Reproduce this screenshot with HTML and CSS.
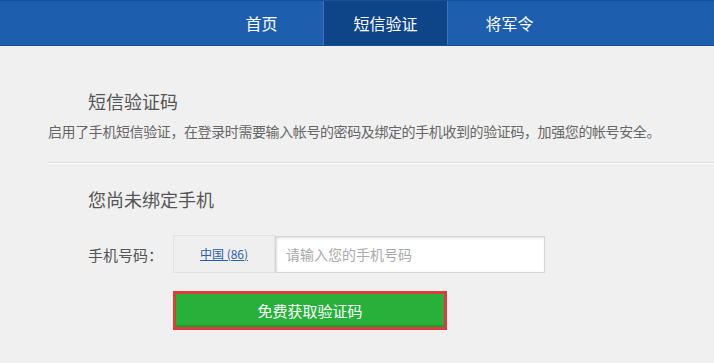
FILE: index.html
```html
<!DOCTYPE html>
<html lang="zh-CN">
<head>
  <meta charset="UTF-8">
  <meta name="viewport" content="width=device-width, initial-scale=1.0">
  <title>短信验证</title>
  <link rel="stylesheet" href="styles.css">
</head>
<body>
  <!-- Top navigation -->
  <div class="nav">
    <a class="nav-item" href="#">首页</a>
    <a class="nav-item active" href="#">短信验证</a>
    <a class="nav-item" href="#">将军令</a>
  </div>

  <div class="content">
    <div class="intro">
      <h2>短信验证码</h2>
      <p>启用了手机短信验证，在登录时需要输入帐号的密码及绑定的手机收到的验证码，加强您的帐号安全。</p>
    </div>

    <div class="bind">
      <h3>您尚未绑定手机</h3>
      <div class="phone-row">
        <label for="phone">手机号码：</label>
        <div class="country"><a href="#">中国 (86)</a></div>
        <input type="text" id="phone" placeholder="请输入您的手机号码">
      </div>
      <div class="btn-wrap">
        <button class="send-btn">免费获取验证码</button>
      </div>
    </div>
  </div>
</body>
</html>
```

FILE: styles.css
```css
body {
  margin: 0;
  background: #f0f0f0;
  font-family: "Microsoft YaHei", "Noto Sans CJK SC", sans-serif;
  color: #555;
}
.nav {
  height: 44px;
  background: #1d5eae;
  border-top: 1px solid #17519a;
  border-bottom: 1px solid #174f95;
  display: flex;
  padding-left: 200px;
}
.nav-item {
  width: 123px;
  line-height: 44px;
  text-align: center;
  color: #fff;
  font-size: 16px;
  text-decoration: none;
}
.nav-item.active {
  background: #0d4588;
  border-left: 1px solid #3d75b8;
  border-right: 1px solid #3d75b8;
}
.content {
  padding-left: 48px;
}
.intro {
  padding-top: 41px;
  padding-bottom: 21px;
  border-bottom: 1px solid #dcdcdc;
  box-shadow: 0 1px 0 #fff;
}
.intro h2 {
  margin: 0 0 6px 40px;
  font-size: 18px;
  font-weight: normal;
  line-height: 28px;
  color: #555;
}
.intro p {
  margin: 0;
  font-size: 14px;
  line-height: 20px;
  color: #666;
  letter-spacing: -0.4px;
}
.bind {
  padding-left: 40px;
}
.bind h3 {
  margin: 20px 0 20px;
  font-size: 18px;
  font-weight: normal;
  line-height: 32px;
  color: #555;
}
.phone-row {
  display: flex;
  align-items: center;
}
.phone-row label {
  width: 85px;
  font-size: 15px;
  color: #555;
}
.country {
  width: 100px;
  height: 36px;
  line-height: 36px;
  text-align: center;
  border: 1px solid #e2e2e2;
  background: #efefef;
  font-size: 12px;
}
.country a {
  color: #2a5ea8;
}
.phone-row input {
  width: 258px;
  height: 35px;
  padding: 0 0 0 10px;
  border: 1px solid #d4d4d4;
  box-shadow: inset 1px 1px 3px #ddd;
  background: #fff;
  font-family: inherit;
  font-size: 14px;
  outline: none;
}
.phone-row input::placeholder {
  color: #aaa;
}
.btn-wrap {
  padding: 18px 0 0 85px;
}
.send-btn {
  width: 274px;
  height: 39px;
  border: 3px solid #de3b3b;
  background: #27b13b;
  box-shadow: inset 0 -2px 0 #1e9a30;
  color: #fff;
  font-family: inherit;
  font-size: 15px;
  cursor: pointer;
}
```
